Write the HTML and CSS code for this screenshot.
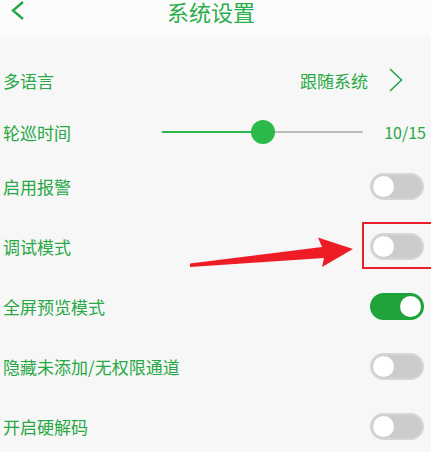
FILE: index.html
```html
<!DOCTYPE html>
<html lang="zh-CN">
<head>
    <meta charset="UTF-8">
    <meta name="viewport" content="width=device-width, initial-scale=1.0">
    <title>系统设置</title>
    <link rel="stylesheet" href="styles.css">
</head>
<body>
    <div class="page">
        <div class="header">
            <a href="javascript:;" class="back">
                <svg width="16" height="22" viewBox="0 0 16 22"><polyline points="13,2 3,10.5 13,19" fill="none" stroke="#27a844" stroke-width="2.4"/></svg>
            </a>
            <div class="title">系统设置</div>
            <div class="side"></div>
        </div>
        <ul class="list">
            <li class="row row-lang">
                <span class="label">多语言</span>
                <span class="value">跟随系统</span>
                <svg class="more" width="16" height="26" viewBox="0 0 16 26"><polyline points="2,2 13.5,13 2,24" fill="none" stroke="#27a844" stroke-width="1.6"/></svg>
            </li>
            <li class="row row-time">
                <span class="label">轮巡时间</span>
                <div class="slider">
                    <div class="track-on" style="width: 50%"></div>
                    <div class="thumb" style="left: 50%"></div>
                </div>
                <span class="count">10/15</span>
            </li>
            <li class="row">
                <span class="label">启用报警</span>
                <span class="switch"></span>
            </li>
            <li class="row">
                <span class="label">调试模式</span>
                <span class="switch"></span>
            </li>
            <li class="row">
                <span class="label">全屏预览模式</span>
                <span class="switch on"></span>
            </li>
            <li class="row">
                <span class="label">隐藏未添加/无权限通道</span>
                <span class="switch"></span>
            </li>
            <li class="row">
                <span class="label">开启硬解码</span>
                <span class="switch"></span>
            </li>
        </ul>
        <!-- 标注 -->
        <div class="mark-box"></div>
        <svg class="mark-arrow" width="431" height="452" viewBox="0 0 431 452">
            <polygon points="190,263.5 322,247 318,237.5 353,249 322,267 324,258 190,267" fill="#ee1c25"/>
        </svg>
    </div>
</body>
</html>
```

FILE: styles.css
```css
*{
    margin: 0;
    padding: 0;
}
ul{
    list-style: none;
}
body{
    background-color: #f7f7f7;
    font-family: "Noto Sans CJK SC", "Noto Sans", sans-serif;
    color: #27a844;
}
.page{
    width: 431px;
    height: 452px;
    overflow: hidden;
    position: relative;
}
.header{
    height: 37px;
    background-color: #fcfcfc;
    display: grid;
    grid-template-columns: 60px 1fr 60px;
    align-items: start;
}
.header .back{
    display: block;
    padding: 0 0 0 10px;
    height: 22px;
}
.header .back svg{
    display: block;
}
.header .title{
    text-align: center;
    font-size: 22px;
    line-height: 22px;
    padding-right: 9px;
    color: #2bae4a;
}
.list{
    padding-top: 15px;
}
.row{
    display: flex;
    align-items: center;
    height: 60px;
    padding: 0 7px 0 3px;
    font-size: 17px;
}
.row .label{
    flex: 1;
}
.row-lang{
    height: 56px;
    padding-right: 27px;
}
.row-lang .value{
    margin-right: 20px;
}
.row-lang .more{
    display: block;
}
.row-time{
    height: 48px;
    padding-right: 5px;
}
.row-time .label{
    flex: none;
    width: 159px;
}
.slider{
    position: relative;
    width: 202px;
    height: 2px;
    background-color: #bcbcbc;
    margin-right: 21px;
}
.slider .track-on{
    height: 100%;
    background-color: #2bb84a;
}
.slider .thumb{
    position: absolute;
    top: -11px;
    width: 24px;
    height: 24px;
    margin-left: -12px;
    border-radius: 50%;
    background-color: #2bba4a;
}
.count{
    font-size: 16px;
}
.switch{
    display: block;
    position: relative;
    width: 54px;
    height: 27px;
    box-sizing: border-box;
    border-radius: 14px;
    background-color: #cccccc;
    border: 2px solid #d6d6d6;
}
.switch::after{
    content: "";
    position: absolute;
    left: 1px;
    top: 1px;
    width: 21px;
    height: 21px;
    border-radius: 50%;
    background-color: #fff;
}
.switch.on{
    background-color: #1fa33a;
    border-color: #1fa33a;
}
.switch.on::after{
    left: auto;
    right: 1px;
}
.mark-box{
    position: absolute;
    left: 362px;
    top: 222px;
    width: 72px;
    height: 47px;
    box-sizing: border-box;
    border: 2px solid #ea1f2a;
}
.mark-arrow{
    position: absolute;
    left: 0;
    top: 0;
}
```
